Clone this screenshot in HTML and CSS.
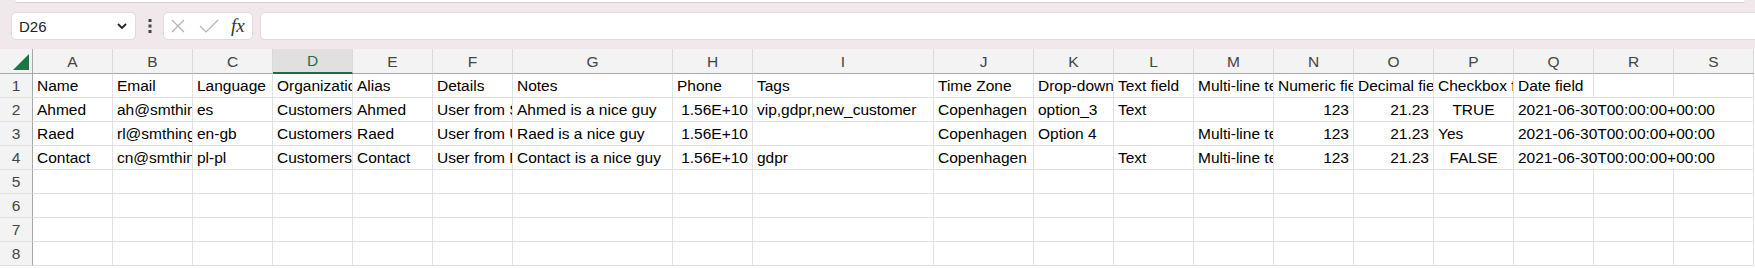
FILE: index.html
```html
<!DOCTYPE html>
<html lang="en">
<head>
    <meta charset="UTF-8">
    <title>Sheet1</title>
    <link rel="stylesheet" href="styles.css">
</head>
<body>
    <div class="ribbon-edge"></div>
    <div class="formula-bar">
        <div class="name-box">
            <span>D26</span>
            <svg width="12" height="8" viewBox="0 0 12 8"><path d="M2 2 L6 6 L10 2" fill="none" stroke="#222" stroke-width="1.8"/></svg>
        </div>
        <div class="grip">
            <svg width="4" height="14" viewBox="0 0 4 14"><rect x="0.5" y="0" width="3" height="3" fill="#444"/><rect x="0.5" y="5.5" width="3" height="3" fill="#444"/><rect x="0.5" y="11" width="3" height="3" fill="#444"/></svg>
        </div>
        <div class="fx-box">
            <svg class="cancel" width="14" height="14" viewBox="0 0 14 14"><path d="M1 1 L13 13 M13 1 L1 13" stroke="#b4b4b4" stroke-width="1.2"/></svg>
            <svg class="enter" width="20" height="14" viewBox="0 0 20 14"><path d="M1 7 L7 13 L19 1" fill="none" stroke="#b4b4b4" stroke-width="1.2"/></svg>
            <span class="fx">fx</span>
        </div>
        <div class="formula-input"></div>
    </div>

    <table class="sheet">
        <colgroup>
            <col style="width:33px">
            <col style="width:80px"><col style="width:80px"><col style="width:80px"><col style="width:80px">
            <col style="width:80px"><col style="width:80px"><col style="width:160px"><col style="width:80px">
            <col style="width:181px"><col style="width:100px"><col style="width:80px"><col style="width:80px">
            <col style="width:80px"><col style="width:80px"><col style="width:80px"><col style="width:80px">
            <col style="width:80px"><col style="width:80px"><col style="width:80px">
        </colgroup>
        <thead>
            <tr>
                <th class="corner"><span class="tri"></span></th>
                <th>A</th><th>B</th><th>C</th><th class="sel">D</th><th>E</th><th>F</th><th>G</th>
                <th>H</th><th>I</th><th>J</th><th>K</th><th>L</th><th>M</th><th>N</th>
                <th>O</th><th>P</th><th>Q</th><th>R</th><th>S</th>
            </tr>
        </thead>
        <tbody>
            <tr>
                <th>1</th>
                <td>Name</td><td>Email</td><td>Language</td><td>Organization</td><td>Alias</td>
                <td>Details</td><td>Notes</td><td>Phone</td><td>Tags</td><td>Time Zone</td>
                <td>Drop-down field</td><td>Text field</td><td>Multi-line text field</td><td>Numeric field</td>
                <td>Decimal field</td><td>Checkbox field</td><td>Date field</td><td></td><td></td>
            </tr>
            <tr>
                <th>2</th>
                <td>Ahmed</td><td>ah@smthing.com</td><td>es</td><td>Customers</td><td>Ahmed</td>
                <td>User from Spain</td><td>Ahmed is a nice guy</td><td class="num">1.56E+10</td>
                <td>vip,gdpr,new_customer</td><td>Copenhagen</td><td>option_3</td><td>Text</td><td></td>
                <td class="num">123</td><td class="num">21.23</td><td class="mid">TRUE</td>
                <td colspan="3">2021-06-30T00:00:00+00:00</td>
            </tr>
            <tr>
                <th>3</th>
                <td>Raed</td><td>rl@smthing.com</td><td>en-gb</td><td>Customers</td><td>Raed</td>
                <td>User from UK</td><td>Raed is a nice guy</td><td class="num">1.56E+10</td>
                <td></td><td>Copenhagen</td><td>Option 4</td><td></td><td>Multi-line text</td>
                <td class="num">123</td><td class="num">21.23</td><td>Yes</td>
                <td colspan="3">2021-06-30T00:00:00+00:00</td>
            </tr>
            <tr>
                <th>4</th>
                <td>Contact</td><td>cn@smthing.com</td><td>pl-pl</td><td>Customers</td><td>Contact</td>
                <td>User from Poland</td><td>Contact is a nice guy</td><td class="num">1.56E+10</td>
                <td>gdpr</td><td>Copenhagen</td><td></td><td>Text</td><td>Multi-line text</td>
                <td class="num">123</td><td class="num">21.23</td><td class="mid">FALSE</td>
                <td colspan="3">2021-06-30T00:00:00+00:00</td>
            </tr>
            <tr><th>5</th><td></td><td></td><td></td><td></td><td></td><td></td><td></td><td></td><td></td><td></td><td></td><td></td><td></td><td></td><td></td><td></td><td></td><td></td><td></td></tr>
            <tr><th>6</th><td></td><td></td><td></td><td></td><td></td><td></td><td></td><td></td><td></td><td></td><td></td><td></td><td></td><td></td><td></td><td></td><td></td><td></td><td></td></tr>
            <tr><th>7</th><td></td><td></td><td></td><td></td><td></td><td></td><td></td><td></td><td></td><td></td><td></td><td></td><td></td><td></td><td></td><td></td><td></td><td></td><td></td></tr>
            <tr><th>8</th><td></td><td></td><td></td><td></td><td></td><td></td><td></td><td></td><td></td><td></td><td></td><td></td><td></td><td></td><td></td><td></td><td></td><td></td><td></td></tr>
        </tbody>
    </table>
</body>
</html>
```

FILE: styles.css
```css
body {
    margin: 0;
    background: #fff;
    font-family: "Liberation Sans", Arial, sans-serif;
    overflow: hidden;
}
.ribbon-edge {
    height: 2px;
    margin-left: 15px;
    margin-right: 10px;
    background: #fff;
    border-bottom: 1px solid #d6d0d3;
    border-radius: 0 0 4px 4px;
    position: relative;
    z-index: 1;
}
.formula-bar {
    display: flex;
    align-items: center;
    height: 49px;
    margin-top: -3px;
    padding-left: 11px;
    padding-top: 3px;
    box-sizing: border-box;
    background: #f0e8eb;
}
.name-box {
    display: flex;
    align-items: center;
    justify-content: space-between;
    box-sizing: border-box;
    width: 125px;
    height: 28px;
    padding: 0 7px 0 7px;
    background: #fff;
    border: 1px solid #e2d9dd;
    border-radius: 5px;
    font-size: 15px;
    color: #222;
}
.grip {
    width: 27px;
    display: flex;
    justify-content: center;
}
.fx-box {
    display: flex;
    align-items: center;
    box-sizing: border-box;
    width: 90px;
    height: 28px;
    padding-left: 7px;
    background: #fff;
    border: 1px solid #e2d9dd;
    border-radius: 5px;
}
.fx-box .enter {
    margin-left: 14px;
}
.fx {
    margin-left: 12px;
    font-family: "Liberation Serif", "Times New Roman", serif;
    font-style: italic;
    font-size: 19px;
    color: #333;
}
.formula-input {
    flex: 1;
    height: 28px;
    margin-left: 7px;
    margin-right: -10px;
    box-sizing: border-box;
    background: #fff;
    border: 1px solid #e2d9dd;
    border-radius: 5px;
}
.sheet {
    table-layout: fixed;
    border-collapse: separate;
    border-spacing: 0;
    width: 1754px;
    font-size: 15.5px;
}
.sheet th,
.sheet td {
    height: 23px;
    line-height: 23px;
    padding: 0 4px;
    border-right: 1px solid #e1e1e1;
    border-bottom: 1px solid #e1e1e1;
    white-space: nowrap;
    overflow: hidden;
    text-overflow: clip;
    text-align: left;
    color: #000;
}
.sheet thead th {
    height: 22px;
    line-height: 23px;
    background: #f3f3f3;
    color: #444;
    font-weight: normal;
    text-align: center;
    border-right-color: #d9d9d9;
    border-bottom-color: #a8a8a8;
}
.sheet thead th.sel {
    background: #e0e0e0;
    color: #1e7145;
    border-bottom: 2px solid #1e6b41;
    height: 21px;
}
.sheet tbody th {
    background: #f3f3f3;
    color: #444;
    font-weight: normal;
    text-align: center;
    padding: 0;
    border-right-color: #a8a8a8;
    border-bottom-color: #e1e1e1;
}
.sheet thead th.corner {
    position: relative;
    padding: 0;
    border-right-color: #a8a8a8;
}
.tri {
    position: absolute;
    right: 3px;
    bottom: 3px;
    width: 0;
    height: 0;
    border-left: 16px solid transparent;
    border-bottom: 16px solid #217346;
}
.num {
    text-align: right !important;
}
.mid {
    text-align: center !important;
}
```
